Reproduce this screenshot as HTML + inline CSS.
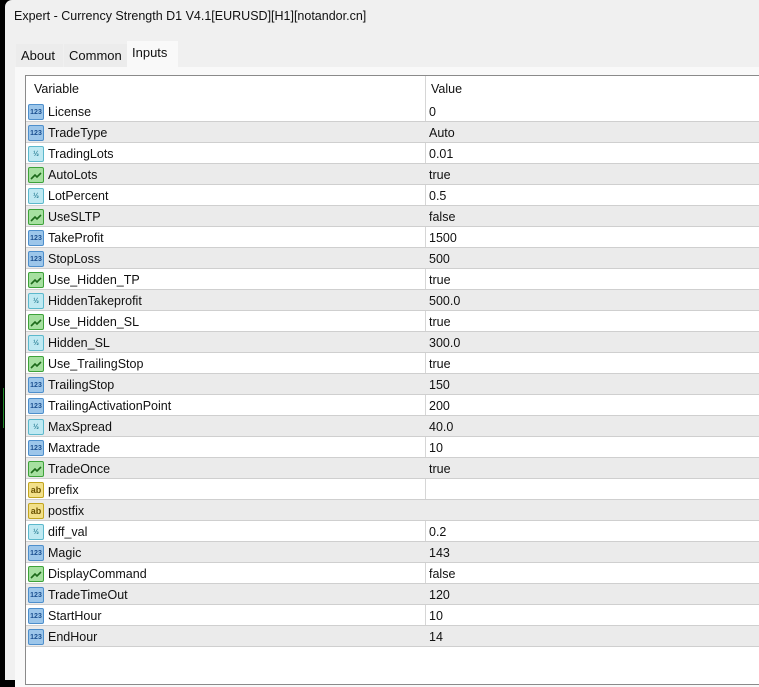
<!DOCTYPE html>
<html><head><style>
*{margin:0;padding:0;box-sizing:border-box}
body{width:759px;height:674px;background:#000;position:relative;overflow:hidden;font-family:"Liberation Sans","Noto Sans CJK SC",sans-serif;font-size:12.5px;color:#111}
.win{position:absolute;left:5px;top:0;width:760px;height:680px;background:#f0f0f0;border-top-left-radius:7px}
.title{position:absolute;left:9px;top:9px;font-size:12.5px;color:#111}
.tab{position:absolute;top:44px;height:23px;background:#ececec;padding:4px 5px;font-size:13px;color:#111}
.tab.sel{top:41px;height:27px;background:#f9f9f9;padding-top:4px}
.panel{position:absolute;left:10px;top:67px;width:760px;height:620px;background:#f9f9f9}
.tbl{position:absolute;left:20px;top:75px;width:740px;height:610px;background:#fff;border:1px solid #8a8a8a}
.hdr{position:absolute;left:0;top:0;width:740px;height:26px}
.hdr span{position:absolute;top:6px;font-size:12.5px}
.row{position:absolute;left:0;width:740px;height:21px;border-bottom:1px solid #cfcfcf}
.row.g{background:#ebebeb}
.row .n{position:absolute;left:22px;top:4px}
.row .v{position:absolute;left:403px;top:4px}
.vl{position:absolute;left:399px;top:0;width:1px;height:571px;background:#d6d6d6}
.ic{position:absolute;left:2px;top:3px;width:16px;height:16px;border-radius:2px;font-size:7px;font-weight:bold;text-align:center;line-height:15px}
.i1{background:#9cc6ea;border:1px solid #4e8fcc;color:#1b4f8f}
.ih{background:#bfe9f2;border:1px solid #5cb8cc;color:#2a7f95}
.ib{background:#a6e0a0;border:1px solid #3ea23a}
.ia{background:#f2e08a;border:1px solid #c2a520;color:#6a5200;font-size:9px}
.strip{position:absolute;left:3px;top:388px;width:1px;height:40px;background:#1f8a2a}
</style></head><body>
<div class="strip"></div>
<div class="win">
<div class="title">Expert - Currency Strength D1 V4.1[EURUSD][H1][notandor.cn]</div>
<div class="panel"></div>
<div class="tab" style="left:11px;width:47px">About</div>
<div class="tab" style="left:59px;width:63px">Common</div>
<div class="tab sel" style="left:122px;width:51px">Inputs</div>
<div class="tbl">
<div class="hdr"><span style="left:8px">Variable</span><span style="left:405px">Value</span></div>
<div class="vl"></div>
<div id="rows"></div>
</div>
</div>
<script>
const d=[["1","License","0"],["1","TradeType","Auto"],["h","TradingLots","0.01"],["b","AutoLots","true"],["h","LotPercent","0.5"],["b","UseSLTP","false"],["1","TakeProfit","1500"],["1","StopLoss","500"],["b","Use_Hidden_TP","true"],["h","HiddenTakeprofit","500.0"],["b","Use_Hidden_SL","true"],["h","Hidden_SL","300.0"],["b","Use_TrailingStop","true"],["1","TrailingStop","150"],["1","TrailingActivationPoint","200"],["h","MaxSpread","40.0"],["1","Maxtrade","10"],["b","TradeOnce","true"],["a","prefix",""],["a","postfix",""],["h","diff_val","0.2"],["1","Magic","143"],["b","DisplayCommand","false"],["1","TradeTimeOut","120"],["1","StartHour","10"],["1","EndHour","14"]];
let h="";d.forEach((r,i)=>{let ic=r[0]=="1"?'<div class="ic i1">123</div>':r[0]=="h"?'<div class="ic ih">½</div>':r[0]=="a"?'<div class="ic ia">ab</div>':'<div class="ic ib"><svg width="14" height="14" viewBox="0 0 14 14"><path d="M2 11 L6 7 L8 9 L12 5" stroke="#1d6a1a" stroke-width="1.6" fill="none"/></svg></div>';
h+=`<div class="row${i%2?' g':''}" style="top:${25+i*21}px">${ic}<span class="n">${r[1]}</span><span class="v">${r[2]}</span></div>`});
document.getElementById("rows").innerHTML=h;
</script>
</body></html>
